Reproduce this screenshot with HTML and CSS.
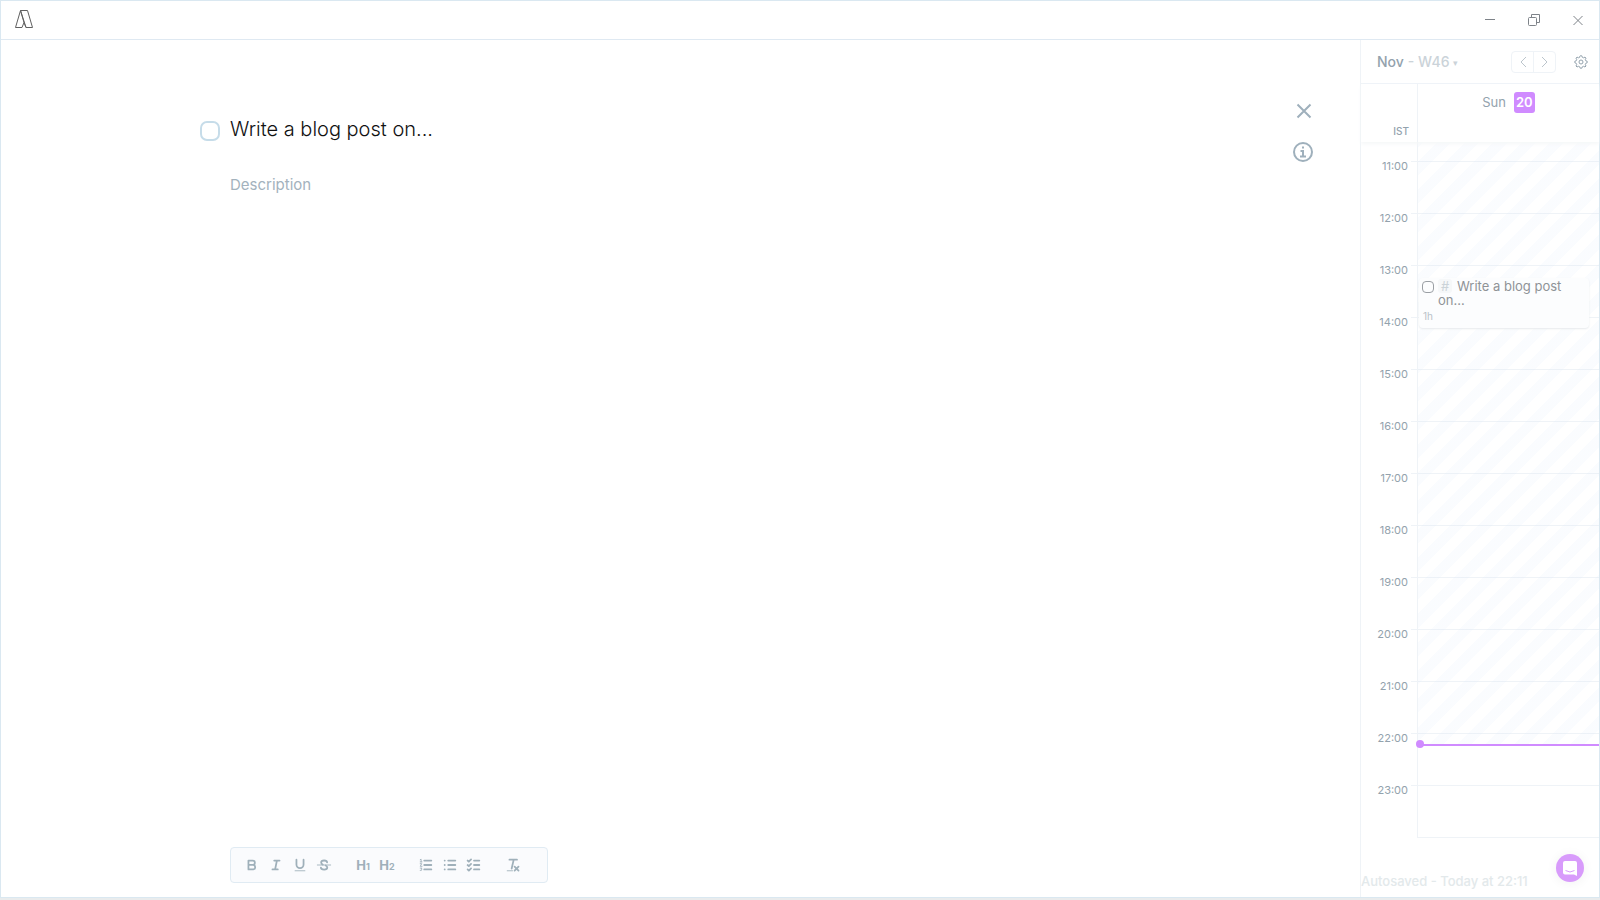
FILE: index.html
```html
<!DOCTYPE html>
<html lang="en">
<head>
    <meta charset="UTF-8">
    <meta name="viewport" content="width=device-width, initial-scale=1">
    <title>Write a blog post on...</title>
    <link rel="stylesheet" href="styles.css">
</head>
<body>
    <div class="window">
        <header class="titlebar">
            <svg class="logo" width="18" height="18" viewBox="0 0 18 18">
                <path d="M5.5 .5H12.5L17.5 17.5H11L9 12.5L7 17.5H.5L5.5 .5L9 12.5M5.5 .5L11 17.5"/>
            </svg>
            <div class="window-buttons">
                <button aria-label="Minimize">
                    <svg width="14" height="14" viewBox="0 0 14 14"><path d="M2 6.5H12"/></svg>
                </button>
                <button aria-label="Restore">
                    <svg width="14" height="14" viewBox="0 0 14 14"><rect x="1.5" y="4.5" width="8" height="8" rx="1"/><path d="M4.5 4V1.5H12.5V9.5H10"/></svg>
                </button>
                <button aria-label="Close">
                    <svg width="14" height="14" viewBox="0 0 14 14"><path d="M2.5 3L11.5 12M11.5 3L2.5 12"/></svg>
                </button>
            </div>
        </header>

        <div class="content">
            <main class="editor">
                <div class="task">
                    <input class="task-check" type="checkbox" aria-label="Done">
                    <div class="task-fields">
                        <input class="task-title" type="text" aria-label="Title" value="Write a blog post on...">
                        <textarea class="task-description" aria-label="Description" placeholder="Description"></textarea>
                        <div class="toolbar">
                            <div class="tool-group">
                                <button aria-label="Bold">
                                    <svg viewBox="0 0 18 18"><path d="M5 4H9.8A2.4 2.4 0 0 1 9.8 8.9H5ZM5 8.9H10.5A2.6 2.6 0 0 1 10.5 14H5Z"/></svg>
                                </button>
                                <button aria-label="Italic">
                                    <svg viewBox="0 0 18 18"><path d="M7 4H13M5 14H11M10 4L8 14"/></svg>
                                </button>
                                <button aria-label="Underline">
                                    <svg viewBox="0 0 18 18"><path d="M5 3V8.5A4 4 0 0 0 13 8.5V3"/><path class="thin" d="M3.5 15.5H14.5"/></svg>
                                </button>
                                <button aria-label="Strike">
                                    <svg viewBox="0 0 18 18"><path class="thin" d="M1.5 9H16.5"/><path d="M12.5 6C12.3 3.2 5.8 3.2 5.8 6.2C5.8 7.4 6.6 8.2 7.6 8.6M10.8 9.6C12 10.1 12.7 10.8 12.7 11.8C12.7 14.9 5.7 14.8 5.5 12"/></svg>
                                </button>
                            </div>
                            <div class="tool-group">
                                <button class="heading" aria-label="Heading 1">H<small>1</small></button>
                                <button class="heading" aria-label="Heading 2">H<small>2</small></button>
                            </div>
                            <div class="tool-group">
                                <button aria-label="Numbered list">
                                    <svg viewBox="0 0 18 18"><path d="M7 4H15M7 9H15M7 14H15"/><path class="thin" d="M2.5 3L3.5 2.5V5.5M2.5 5.5H4.5M2.5 7.5H4.2L2.5 10.5H4.5M2.5 12.5H4.5L3.5 13.8C5 14 4.5 15.5 2.5 15.2"/></svg>
                                </button>
                                <button aria-label="Bullet list">
                                    <svg viewBox="0 0 18 18"><path d="M7 4H15M7 9H15M7 14H15M3 4H3.1M3 9H3.1M3 14H3.1"/></svg>
                                </button>
                                <button aria-label="Check list">
                                    <svg viewBox="0 0 18 18"><path d="M9 4H15M9 9H15M9 14H15"/><path d="M1.8 4L3.2 5.3L5.7 2.8M1.8 9L3.2 10.3L5.7 7.8M1.8 14L3.2 15.3L5.7 12.8"/></svg>
                                </button>
                            </div>
                            <div class="tool-group">
                                <button aria-label="Clear formatting">
                                    <svg viewBox="0 0 18 18"><path d="M5 3H13.5M9.8 3L7.5 13M10.8 10.8L15.2 15.2M15.2 10.8L10.8 15.2"/><path class="thin" d="M2.5 15.5H8.5"/></svg>
                                </button>
                            </div>
                        </div>
                    </div>
                </div>
                <div class="editor-actions">
                    <button aria-label="Close task">
                        <svg width="20" height="20" viewBox="0 0 20 20"><path d="M4.5 3.5L17.5 16.5M17.5 3.5L4.5 16.5"/></svg>
                    </button>
                    <button aria-label="Info">
                        <svg width="20" height="20" viewBox="0 0 20 20"><circle cx="10" cy="10" r="9"/><path d="M7.5 9H10V14.5M7 14.5H13M9 5.5H11"/></svg>
                    </button>
                </div>
            </main>

            <aside class="calendar">
                <div class="calendar-bar">
                    <button class="month">Nov <span>- W46 <i>▾</i></span></button>
                    <div class="pager">
                        <button aria-label="Previous"><svg width="10" height="12" viewBox="0 0 10 12"><path d="M8 1L3 6L8 11"/></svg></button>
                        <button aria-label="Next"><svg width="10" height="12" viewBox="0 0 10 12"><path d="M2 1L7 6L2 11"/></svg></button>
                    </div>
                    <button class="settings" aria-label="Settings">
                        <svg width="14" height="14" viewBox="0 0 14 14"><path d="M5.8 1.2L6.2 .8H7.8L8.3 2.3L9.5 2.8L11 2.1L12 3.1L11.3 4.6L11.8 5.8L13.2 6.3V7.7L11.8 8.3L11.3 9.5L12 11L11 12L9.5 11.3L8.3 11.8L7.8 13.2H6.2L5.7 11.8L4.5 11.3L3 12L2 11L2.7 9.5L2.2 8.3L.8 7.7V6.3L2.2 5.8L2.7 4.6L2 3.1L3 2.1L4.5 2.8L5.7 2.3Z"/><circle cx="7" cy="7" r="2"/></svg>
                    </button>
                </div>
                <div class="day-head">
                    <span class="zone">IST</span>
                    <div class="day">Sun <b>20</b></div>
                </div>
                <div class="hours">
                    <div class="hour partial"><span></span><div></div></div>
                    <div class="hour"><span>11:00</span><div></div></div>
                    <div class="hour"><span>12:00</span><div></div></div>
                    <div class="hour"><span>13:00</span><div></div></div>
                    <div class="hour"><span>14:00</span><div></div></div>
                    <div class="hour"><span>15:00</span><div></div></div>
                    <div class="hour"><span>16:00</span><div></div></div>
                    <div class="hour"><span>17:00</span><div></div></div>
                    <div class="hour"><span>18:00</span><div></div></div>
                    <div class="hour"><span>19:00</span><div></div></div>
                    <div class="hour"><span>20:00</span><div></div></div>
                    <div class="hour"><span>21:00</span><div></div></div>
                    <div class="hour"><span>22:00</span><div></div></div>
                    <div class="hour last"><span>23:00</span><div></div></div>
                    <div class="past"></div>
                    <div class="event">
                        <input type="checkbox" aria-label="Event done">
                        <p><span class="tag">#</span>Write a blog post on...</p>
                        <small>1h</small>
                    </div>
                    <div class="now"></div>
                </div>
                <p class="autosaved">Autosaved - Today at 22:11</p>
            </aside>
        </div>
        <button class="chat" aria-label="Open chat">
            <svg width="16" height="16" viewBox="0 0 16 16"><path class="bubble" d="M3 1H13Q15 1 15 3V16L12 14.5H3Q1 14.5 1 12.5V3Q1 1 3 1Z"/><path class="smile" d="M3.5 10.5Q8 13.5 12.5 10.5"/></svg>
        </button>
    </div>
</body>
</html>
```
FILE: styles.css
```css
* {
    box-sizing: border-box;
}
body {
    margin: 0;
    font-family: Inter, "Liberation Sans", sans-serif;
    color: #93a2ad;
    background-color: #e9eced;
}
button {
    display: flex;
    align-items: center;
    justify-content: center;
    padding: 0;
    border: none;
    background: none;
    color: inherit;
    font: inherit;
    cursor: pointer;
}
input, textarea {
    margin: 0;
    padding: 0;
    border: none;
    outline: none;
    background: none;
    font: inherit;
}
p {
    margin: 0;
}
svg {
    display: block;
    fill: none;
    stroke: currentColor;
}
.window {
    display: flex;
    flex-direction: column;
    position: relative;
    height: calc(100vh - 2px);
    border: 1px solid #dae8f1;
    background-color: #fff;
}
.titlebar {
    display: flex;
    justify-content: space-between;
    align-items: center;
    height: 39px;
    padding: 0 14px;
    border-bottom: 1px solid #dfe9f2;
}
.logo {
    margin-bottom: 2px;
    color: #606060;
}
.window-buttons {
    display: flex;
    gap: 30px;
    color: #7e8389;
}
.content {
    flex: 1;
    display: flex;
    min-height: 0;
}

/* editor */
.editor {
    flex: 1;
    display: flex;
    justify-content: space-between;
    padding: 60px 47px 14px 199px;
}
.task {
    flex: 1;
    display: flex;
    gap: 10px;
    padding-top: 14px;
}
.task-check {
    appearance: none;
    width: 20px;
    height: 20px;
    margin-top: 7px;
    border: 2px solid #c6dce9;
    border-radius: 7px;
}
.task-fields {
    flex: 1;
    display: flex;
    flex-direction: column;
    align-items: flex-start;
}
.task-title {
    width: 100%;
    height: 30px;
    font-size: 20px;
    font-weight: 300;
    color: #111;
}
.task-description {
    flex: 1;
    width: 100%;
    margin-top: 30px;
    font-size: 15px;
    line-height: 22px;
    resize: none;
}
.task-description::placeholder {
    color: #a3b2bd;
}
.editor-actions {
    display: flex;
    flex-direction: column;
    gap: 21px;
    padding-top: 1px;
    color: #9fb0bc;
    stroke-width: 2;
}
.toolbar {
    display: flex;
    gap: 15px;
    height: 36px;
    padding: 0 22px 0 9px;
    border: 1px solid #e0ebf3;
    border-radius: 4px;
    background-color: #fafbfd;
    color: #9fb0ba;
}
.tool-group {
    display: flex;
}
.tool-group button {
    width: 24px;
}
.tool-group svg {
    width: 16px;
    height: 16px;
    stroke-width: 2;
    stroke-linecap: round;
    stroke-linejoin: round;
}
.tool-group .thin {
    stroke-width: 1;
}
.tool-group .heading {
    align-items: baseline;
    align-self: center;
    font-size: 13px;
    font-weight: 700;
}
.heading small {
    font-size: 9px;
}

/* calendar */
.calendar {
    display: flex;
    flex-direction: column;
    width: 239px;
    border-left: 1px solid #eff3f7;
}
.calendar-bar {
    display: flex;
    align-items: center;
    height: 44px;
    padding: 0 11px 0 16px;
    border-bottom: 1px solid #eff3f7;
}
.month {
    gap: 4px;
    margin-right: auto;
    font-size: 14px;
    font-weight: 500;
}
.month span {
    color: #cbd3d9;
}
.month i {
    font-size: 9px;
    font-style: normal;
    vertical-align: 1px;
}
.pager {
    display: flex;
    margin-right: 18px;
    border: 1px solid #eff3f7;
    border-radius: 4px;
    color: #bcc5cc;
}
.pager button {
    width: 21px;
    height: 20px;
}
.pager button + button {
    width: 22px;
    border-left: 1px solid #eff3f7;
}
.day-head {
    display: grid;
    grid-template-columns: 56px 1fr;
    height: 58px;
    box-shadow: 0 2px 4px #f5f7f8;
    z-index: 1;
}
.zone {
    align-self: end;
    padding: 0 8px 5px 0;
    font-size: 10px;
    font-weight: 500;
    text-align: right;
}
.day {
    display: flex;
    justify-content: center;
    align-items: flex-start;
    gap: 8px;
    padding-top: 8px;
    border-left: 1px solid #eff3f7;
    font-size: 13px;
    line-height: 21px;
}
.day b {
    width: 21px;
    border-radius: 3px;
    background-color: #d08bff;
    color: #fff;
    font-weight: 600;
    text-align: center;
}
.hours {
    position: relative;
}
.hour {
    display: grid;
    grid-template-columns: 50px 1fr;
    height: 52px;
}
.hour.partial {
    height: 19px;
}
.hour span {
    padding: 0 3px 0 0;
    font-size: 11px;
    line-height: 10px;
    text-align: right;
}
.hour div {
    border-top: 1px solid #eff3f7;
}
.hour.partial div {
    border-top: none;
}
.hour div::before {
    content: "";
    display: block;
    height: 100%;
    margin-left: 6px;
    border-left: 1px solid #eff3f7;
}
.hour.last div::before {
    border-bottom: 1px solid #eff3f7;
}
/* hours that are already over */
.past {
    position: absolute;
    top: 0;
    right: 0;
    left: 57px;
    height: 602px;
    background: repeating-linear-gradient(-45deg, transparent 0 10px, rgba(215, 230, 250, 0.12) 10px 20px);
}
.event {
    position: absolute;
    top: 136px;
    right: 10px;
    left: 58px;
    display: grid;
    grid-template-columns: 16px 1fr;
    height: 50px;
    padding: 1px 3px 3px;
    border-radius: 4px;
    background-color: #fcfdfe;
    box-shadow: 0 1px 2px #e7eaed;
    font-size: 13px;
    line-height: 14px;
    color: #8f9397;
}
.event input {
    appearance: none;
    width: 12px;
    height: 12px;
    margin-top: 2px;
    border: 1px solid #9a9fa4;
    border-radius: 4px;
}
.tag {
    display: inline-block;
    width: 14px;
    margin-right: 5px;
    border-radius: 3px;
    background-color: #f6f8f9;
    color: #cbd3d8;
    text-align: center;
}
.event small {
    grid-column: 1 / -1;
    padding-left: 1px;
    font-size: 10px;
    color: #b9c2c8;
}
.now {
    position: absolute;
    top: 602px;
    right: 0;
    left: 57px;
    height: 2px;
    background-color: #d08bff;
}
.now::before {
    content: "";
    position: absolute;
    top: -4px;
    left: -2px;
    width: 8px;
    height: 8px;
    border-radius: 50%;
    background-color: #d08bff;
}
.autosaved {
    margin-top: auto;
    padding-bottom: 8px;
    font-size: 13px;
    font-weight: 500;
    color: #e3e9eb;
}
.chat {
    position: absolute;
    right: 15px;
    bottom: 15px;
    width: 28px;
    height: 28px;
    border-radius: 50%;
    background-color: #d89bfb;
    box-shadow: 0 1px 12px rgba(0, 0, 0, 0.06);
}
.bubble {
    fill: #fff;
    stroke: none;
}
.smile {
    stroke: #d89bfb;
}
```
